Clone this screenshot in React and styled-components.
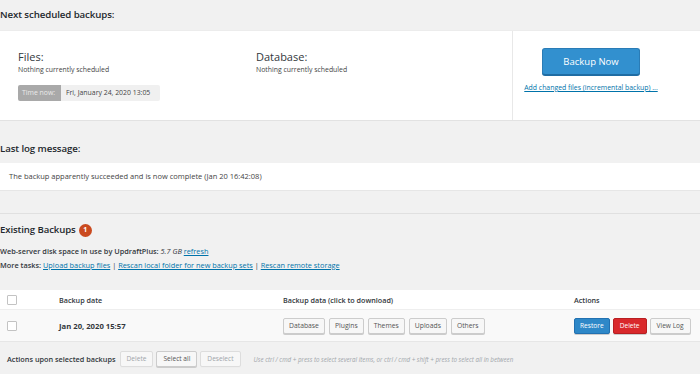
import React from "react";
import styled, { createGlobalStyle } from "styled-components";

const Global = createGlobalStyle`
  html, body { margin: 0; padding: 0; background: #f1f1f1; }
  body { font-family: "Open Sans", "Noto Sans", sans-serif; color: #32373c; }
  * { box-sizing: border-box; }
`;

const Page = styled.div`
  width: 700px;
  height: 374px;
  overflow: hidden;
  background: #f1f1f1;
`;

const SectionTitle = styled.div`
  height: ${(p) => p.$h}px;
  padding-top: ${(p) => p.$pt}px;
  font-size: 9.7px;
  line-height: 15px;
  font-weight: 600;
  color: #23282d;
  letter-spacing: -0.1px;
`;

const ScheduleBox = styled.div`
  height: 91px;
  background: #fff;
  border-top: 1px solid #ececec;
  border-bottom: 1px solid #e2e2e2;
  display: grid;
  grid-template-columns: 512px 1fr;
`;

const SchedLeft = styled.div`
  display: grid;
  grid-template-columns: 238px 1fr;
  padding: 18px 0 0 18px;
`;

const SchedCol = styled.div`
  display: flex;
  flex-direction: column;
  align-items: flex-start;
`;

const SubHead = styled.div`
  font-size: 11px;
  line-height: 15px;
  color: #32373c;
`;

const Small = styled.div`
  font-size: 6.9px;
  line-height: 12px;
  color: #444;
`;

const TimeNow = styled.div`
  display: flex;
  margin-top: 9px;
  height: 16px;
  font-size: 6.9px;
  line-height: 16px;
`;

const TimeLabel = styled.span`
  background: #a9a9a9;
  color: #eaeaea;
  padding: 0 4px;
  border-radius: 2px 0 0 2px;
  width: 43px;
`;

const TimeValue = styled.span`
  background: #f0f0f0;
  color: #444;
  padding: 0 5px;
  width: 99px;
  border-radius: 0 2px 2px 0;
`;

const SchedRight = styled.div`
  border-left: 1px solid #e8e8e8;
  padding: 17px 0 0 11px;
`;

const RightInner = styled.div`
  display: inline-flex;
  flex-direction: column;
  align-items: center;
  width: 134px;
`;

const BigButton = styled.button`
  width: 98px;
  height: 27px;
  background: #3290cf;
  border: 1px solid #2a7cb6;
  border-bottom-color: #1f6ca3;
  border-radius: 3px;
  color: #fff;
  font-family: inherit;
  font-size: 9.5px;
  padding: 0;
  box-shadow: 0 1px 0 #1f6ca3;
`;

const Link = styled.a`
  color: #0073aa;
  text-decoration: underline;
`;

const IncLink = styled(Link)`
  margin-top: 7px;
  font-size: 6.9px;
  line-height: 12px;
  white-space: nowrap;
`;

const LogBox = styled.div`
  height: 28px;
  background: #fff;
  border-bottom: 1px solid #e6e6e6;
  padding-left: 9px;
  font-size: 7.5px;
  line-height: 27px;
  color: #444;
`;

const Spacer = styled.div`
  height: 23px;
  border-bottom: 1px solid #e0e0e0;
`;

const ExistingHead = styled.div`
  display: flex;
  align-items: center;
  gap: 3px;
  padding-top: 9px;
  height: 23px;
  font-size: 9.6px;
  line-height: 14px;
  font-weight: 600;
  color: #23282d;
  letter-spacing: -0.1px;
`;

const Badge = styled.span`
  display: inline-flex;
  align-items: center;
  justify-content: center;
  width: 13px;
  height: 13px;
  border-radius: 50%;
  background: #ca4a1f;
  color: #fff;
  font-size: 7px;
  font-weight: 700;
`;

const InfoLines = styled.div`
  margin-top: 7px;
  font-size: 7.35px;
  line-height: 14px;
  color: #32373c;
`;

const Strong = styled.span`
  font-weight: 600;
`;

const Em = styled.span`
  font-style: italic;
`;

const Table = styled.div`
  margin-top: 18px;
`;

const HeadRow = styled.div`
  display: grid;
  grid-template-columns: 59px 224px 291px 1fr;
  align-items: center;
  height: 19px;
  background: #fff;
  font-size: 7.2px;
  font-weight: 600;
  color: #32373c;
`;

const BodyRow = styled(HeadRow)`
  height: 33px;
  background: #f9f9f9;
  border-top: 1px solid #eeeeee;
  border-bottom: 1px solid #e6e6e6;
`;

const CheckCell = styled.div`
  padding-left: 7px;
  display: flex;
  align-items: center;
`;

const Check = styled.span`
  width: 10px;
  height: 10px;
  border: 1px solid #c3c3c3;
  background: #fff;
  border-radius: 1px;
  display: block;
`;

const Bold = styled.div`
  font-weight: 700;
  font-size: 7.7px;
`;

const BtnGroup = styled.div`
  display: flex;
  gap: ${(p) => p.$gap || 4}px;
  align-items: center;
`;

const variants = {
  default: { bg: "#f7f7f7", bd: "#cccccc", fg: "#555" },
  primary: { bg: "#2e88c8", bd: "#2271b1", fg: "#fff" },
  danger: { bg: "#d9292c", bd: "#b81f22", fg: "#fff" },
  disabled: { bg: "#f7f7f7", bd: "#dddddd", fg: "#a0a5aa" },
};

const Btn = styled.button`
  height: 16px;
  margin: 0;
  padding: 0 ${(p) => p.$px || 5}px;
  font-family: inherit;
  font-size: ${(p) => p.$fs || 6.6}px;
  line-height: 14px;
  background: ${(p) => variants[p.$v || "default"].bg};
  border: 1px solid ${(p) => variants[p.$v || "default"].bd};
  color: ${(p) => variants[p.$v || "default"].fg};
  border-radius: 2px;
  box-shadow: 0 1px 0 ${(p) => (p.$v === "disabled" ? "#eee" : "#ccc")};
`;

const Footer = styled.div`
  display: flex;
  align-items: center;
  padding: 9px 0 0 7px;
  gap: 3px;
`;

const FooterLabel = styled.span`
  font-size: 7.3px;
  font-weight: 600;
  color: #32373c;
  margin-right: 1px;
`;

const Hint = styled.span`
  margin-left: 10px;
  font-size: 6.2px;
  font-style: italic;
  color: #a0a5aa;
  white-space: nowrap;
`;

export default function App() {
  return (
    <Page>
      <Global />
      <SectionTitle $h={30} $pt={7}>Next scheduled backups:</SectionTitle>
      <ScheduleBox>
        <SchedLeft>
          <SchedCol>
            <SubHead>Files:</SubHead>
            <Small>Nothing currently scheduled</Small>
            <TimeNow>
              <TimeLabel>Time now:</TimeLabel>
              <TimeValue>Fri, January 24, 2020 13:05</TimeValue>
            </TimeNow>
          </SchedCol>
          <SchedCol>
            <SubHead>Database:</SubHead>
            <Small>Nothing currently scheduled</Small>
          </SchedCol>
        </SchedLeft>
        <SchedRight>
          <RightInner>
            <BigButton>Backup Now</BigButton>
            <IncLink href="#">Add changed files (incremental backup) ...</IncLink>
          </RightInner>
        </SchedRight>
      </ScheduleBox>
      <SectionTitle $h={42} $pt={20}>Last log message:</SectionTitle>
      <LogBox>The backup apparently succeeded and is now complete (Jan 20 16:42:08)</LogBox>
      <Spacer />
      <ExistingHead>
        Existing Backups <Badge>1</Badge>
      </ExistingHead>
      <InfoLines>
        <div>
          <Strong>Web-server disk space in use by UpdraftPlus:</Strong> <Em>5.7 GB</Em>{" "}
          <Link href="#">refresh</Link>
        </div>
        <div>
          <Strong>More tasks:</Strong> <Link href="#">Upload backup files</Link> |{" "}
          <Link href="#">Rescan local folder for new backup sets</Link> |{" "}
          <Link href="#">Rescan remote storage</Link>
        </div>
      </InfoLines>
      <Table>
        <HeadRow>
          <CheckCell><Check /></CheckCell>
          <div>Backup date</div>
          <div>Backup data (click to download)</div>
          <div>Actions</div>
        </HeadRow>
        <BodyRow>
          <CheckCell><Check /></CheckCell>
          <Bold>Jan 20, 2020 15:57</Bold>
          <BtnGroup>
            <Btn $fs={6.8}>Database</Btn>
            <Btn $fs={6.8}>Plugins</Btn>
            <Btn $fs={6.8}>Themes</Btn>
            <Btn $fs={6.8}>Uploads</Btn>
            <Btn $fs={6.8}>Others</Btn>
          </BtnGroup>
          <BtnGroup $gap={3}>
            <Btn $v="primary">Restore</Btn>
            <Btn $v="danger" $px={6}>Delete</Btn>
            <Btn $px={6}>View Log</Btn>
          </BtnGroup>
        </BodyRow>
      </Table>
      <Footer>
        <FooterLabel>Actions upon selected backups</FooterLabel>
        <Btn $v="disabled" $px={6}>Delete</Btn>
        <Btn $px={6}>Select all</Btn>
        <Btn $v="disabled" $px={6}>Deselect</Btn>
        <Hint>
          Use ctrl / cmd + press to select several items, or ctrl / cmd + shift + press to select all in between
        </Hint>
      </Footer>
    </Page>
  );
}
